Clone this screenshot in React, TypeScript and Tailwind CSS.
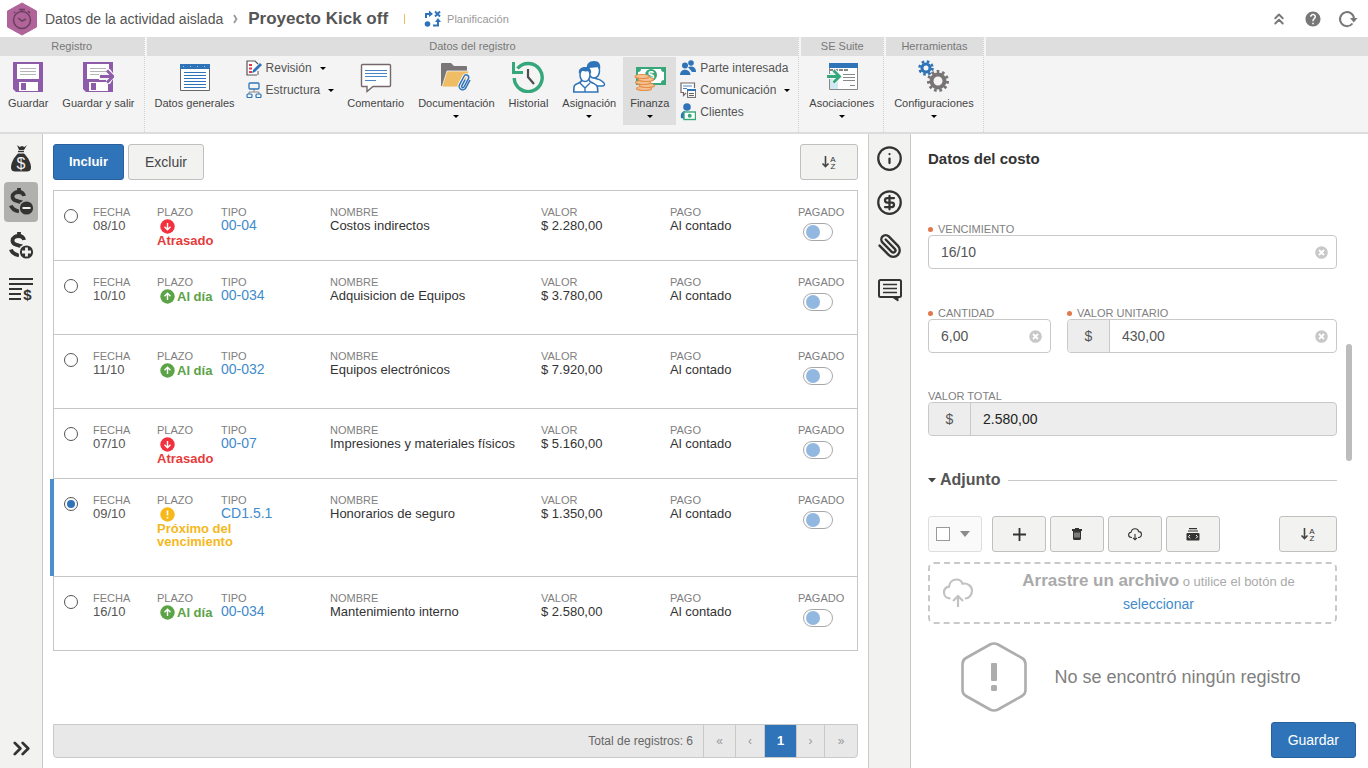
import { useState } from "react";
import type { ReactNode } from "react";
import { ChevronsRight, ChevronsUp, CircleDollarSign, Info, Paperclip } from "lucide-react";
import { MdHelp } from "react-icons/md";
import clsx from "clsx";

type Status = "late" | "onTime" | "soon";

interface Cost {
  id: number;
  date: string;
  status: Status;
  type: string;
  name: string;
  value: string;
}

const costs: Cost[] = [
  { id: 1, date: "08/10", status: "late", type: "00-04", name: "Costos indirectos", value: "$ 2.280,00" },
  { id: 2, date: "10/10", status: "onTime", type: "00-034", name: "Adquisicion de Equipos", value: "$ 3.780,00" },
  { id: 3, date: "11/10", status: "onTime", type: "00-032", name: "Equipos electrónicos", value: "$ 7.920,00" },
  { id: 4, date: "07/10", status: "late", type: "00-07", name: "Impresiones y materiales físicos", value: "$ 5.160,00" },
  { id: 5, date: "09/10", status: "soon", type: "CD1.5.1", name: "Honorarios de seguro", value: "$ 1.350,00" },
  { id: 6, date: "16/10", status: "onTime", type: "00-034", name: "Mantenimiento interno", value: "$ 2.580,00" },
];

const rowHeights: Record<Status, string> = {
  late: "h-[70px]",
  onTime: "h-[74px]",
  soon: "h-[98px]",
};

/* ---------- Ribbon icons ---------- */

function SaveIcon({ exit = false }: { exit?: boolean }) {
  return (
    <svg width="32" height="32" viewBox="0 0 32 32" aria-hidden="true">
      <path d="M1 1h30v30H4l-3-3z" fill="#8e5bab" />
      <path d="M5 3h22v15H5z" fill="#fff" />
      <path d="M8 7.500h16M8 10.500h16M8 13.500h16" stroke="#b5b5b5" strokeWidth="1" />
      <path d="M7 21h19v9H7z" fill="#fff" />
      <path d="M9 22h5v7H9z" fill="#8e5bab" />
      {exit && (
        <>
          <path d="M17 12h7V8h4l5 7-5 8h-4v-4h-7z" fill="#f4f4f4" />
          <path d="M18 15.500h13M25 9.500l6 6-6 6" fill="none" stroke="#8e5bab" strokeWidth="2.800" />
        </>
      )}
    </svg>
  );
}

function GeneralDataIcon() {
  return (
    <svg width="32" height="32" viewBox="0 0 32 32" aria-hidden="true">
      <path d="M1.500 3.500h29v26h-29z" fill="#fff" stroke="#666" />
      <path d="M1 3h30v5H1z" fill="#2f74b8" />
      <path d="M5 11.500h22M5 14.500h22M5 17.500h22M5 20.500h22M5 23.500h22M5 26.500h22" stroke="#2f74b8" />
      <path d="M4 5.500h1M11 5.500h1M18 5.500h1M25 5.500h1" stroke="#a8c8e6" />
    </svg>
  );
}

function CommentRibbonIcon() {
  return (
    <svg width="32" height="32" viewBox="0 0 32 32" aria-hidden="true">
      <path d="M2.500 3.500h27a1 1 0 0 1 1 1v20a1 1 0 0 1-1 1H13l-6 5v-5H2.500a1 1 0 0 1-1-1v-20a1 1 0 0 1 1-1z" fill="#fff" stroke="#75676a" strokeWidth="1.400" />
      <path d="M5 9.500h22M5 12.500h22M5 15.500h22M5 19.500h11" stroke="#4a86c5" />
    </svg>
  );
}

function DocumentsIcon() {
  return (
    <svg width="32" height="32" viewBox="0 0 32 32" aria-hidden="true">
      <path d="M1 3a1 1 0 0 1 1-1h9l3 3h12a1 1 0 0 1 1 1v19H1z" fill="#7a7576" />
      <path d="M7 10h22l-5 16H2z" fill="#efbd64" stroke="#f4f4f4" strokeWidth="0.800" />
      <g transform="rotate(28 25 22)">
        <path d="M28 17v9a3.500 3.500 0 0 1-7 0V16.500a2.500 2.500 0 0 1 5 0V26a1 1 0 0 1-2.500 0v-7" fill="none" stroke="#f4f4f4" strokeWidth="3.500" />
        <path d="M28 17v9a3.500 3.500 0 0 1-7 0V16.500a2.500 2.500 0 0 1 5 0V26a1 1 0 0 1-2.500 0v-7" fill="none" stroke="#2f74b8" strokeWidth="1.500" />
      </g>
    </svg>
  );
}

function HistoryIcon() {
  return (
    <svg width="34" height="32" viewBox="0 0 34 32" aria-hidden="true">
      <path d="M6.500 7.500A14 14 0 1 1 3.200 17" fill="none" stroke="#35a77b" strokeWidth="3.400" />
      <path d="M1 1v12h11v-3H4V1z" fill="#35a77b" />
      <path d="M17 8v8l6 7" fill="none" stroke="#4d4d4d" strokeWidth="2.200" />
    </svg>
  );
}

function AssignIcon() {
  return (
    <svg width="34" height="34" viewBox="0 0 34 34" aria-hidden="true">
      <path d="M20 17c1 2 7 1 11 5 2 2 2 3 0 4h-8" fill="#fff" stroke="#2f74b8" strokeWidth="1.500" />
      <ellipse cx="22" cy="11" rx="5.500" ry="7" fill="#fff" stroke="#2f74b8" strokeWidth="1.500" />
      <path d="M15 9c-1-5 2-8 7-8s7 3 6 9l-2-3c-4 1-8 0-11 2z" fill="#2f74b8" />
      <path d="M1.800 32c0-7 0-7 5-9 3-1 3-3 3-4h7c0 2 1 3 4 4 4 2 5 2 5 9z" fill="#fff" stroke="#2f74b8" strokeWidth="1.600" />
      <path d="M8 23l5 5 5-5M13 28v4" fill="none" stroke="#2f74b8" strokeWidth="1.400" />
      <ellipse cx="13" cy="15" rx="5" ry="6.500" fill="#fff" stroke="#2f74b8" strokeWidth="1.500" />
      <path d="M7 14c-1-5 2-7 6-7s7 2 6 7l-2-3c-3 1-7 0-8 0z" fill="#2f74b8" />
    </svg>
  );
}

function FinanceIcon() {
  return (
    <svg width="34" height="32" viewBox="0 0 34 32" aria-hidden="true">
      <path d="M3 6h30v18H3z" fill="#35a77b" />
      <path d="M8 8h20a3 3 0 0 0 3 3v8a3 3 0 0 0-3 3H8a3 3 0 0 0-3-3v-8a3 3 0 0 0 3-3z" fill="#fff" />
      <circle cx="18" cy="14" r="6" fill="#35a77b" />
      <text x="18" y="18" textAnchor="middle" fontSize="11" fontWeight="bold" fill="#fff">$</text>
      <g fill="#f6c294" stroke="#e58f48" strokeWidth="1.200">
        <ellipse cx="11" cy="27.500" rx="7.500" ry="2" />
        <ellipse cx="14" cy="24.500" rx="7.500" ry="2" />
        <ellipse cx="10" cy="21.500" rx="7.500" ry="2" />
        <ellipse cx="13" cy="18.500" rx="7.500" ry="2" />
        <ellipse cx="9" cy="15.500" rx="7" ry="2" />
      </g>
    </svg>
  );
}

function AssociationsIcon() {
  return (
    <svg width="34" height="32" viewBox="0 0 34 32" aria-hidden="true">
      <path d="M4.500 2.500h28v26h-28z" fill="#fff" stroke="#888" />
      <path d="M4 2h29v5H4z" fill="#2f74b8" />
      <path d="M5 12h8v16H5z" fill="#cfeaf3" />
      <path d="M4 9h19" stroke="#888" strokeWidth="2" strokeDasharray="4 1" />
      <path d="M18 13.500h12M18 16.500h12M18 19.500h12M25 24.500h5" stroke="#888" />
      <path d="M2 15.500h12M8.500 9.500l6 6-6 6" fill="none" stroke="#f4f4f4" strokeWidth="5" />
      <path d="M2 15.500h12M8.500 9.500l6 6-6 6" fill="none" stroke="#35a77b" strokeWidth="2.800" />
    </svg>
  );
}

function SettingsIcon() {
  return (
    <svg width="34" height="34" viewBox="0 0 34 34" aria-hidden="true">
      <circle cx="9" cy="8" r="4" fill="none" stroke="#2f74b8" strokeWidth="3" />
      <circle cx="9" cy="8" r="6.500" fill="none" stroke="#2f74b8" strokeWidth="2.600" strokeDasharray="2.600 2.500" />
      <circle cx="21" cy="21" r="6.500" fill="none" stroke="#787475" strokeWidth="4" />
      <circle cx="21" cy="21" r="9.500" fill="none" stroke="#787475" strokeWidth="3" strokeDasharray="2.600 2.800" />
    </svg>
  );
}

function ReviewIcon() {
  return (
    <svg width="16" height="16" viewBox="0 0 16 16" aria-hidden="true">
      <path d="M11 15H1V1h8l3 3" fill="#fff" stroke="#555" strokeWidth="1.200" />
      <path d="M12 11v4" stroke="#555" />
      <path d="M3 5h3M3 8.500h3M3 12h3" stroke="#e0394a" strokeWidth="1.800" />
      <path d="M6 13l1-3 7-7 2 2-7 7z" fill="#2f74b8" />
    </svg>
  );
}

function StructureIcon() {
  return (
    <svg width="16" height="16" viewBox="0 0 16 16" fill="none" aria-hidden="true">
      <path d="M8 7v3M3 12v-2h10v2" stroke="#888" />
      <rect x="3" y="1" width="10" height="6" rx="1" stroke="#2f74b8" strokeWidth="1.300" />
      <rect x="1" y="12" width="5" height="3.500" rx="1" stroke="#2f74b8" strokeWidth="1.200" />
      <rect x="10" y="12" width="5" height="3.500" rx="1" stroke="#2f74b8" strokeWidth="1.200" />
    </svg>
  );
}

function StakeholderIcon() {
  return (
    <svg width="16" height="16" viewBox="0 0 16 16" fill="#2f74b8" aria-hidden="true">
      <circle cx="11" cy="3" r="2.800" />
      <path d="M8 7c3-1 8-1 8 5h-4z" />
      <circle cx="5" cy="5.500" r="3" />
      <path d="M0 15c0-7 10-7 10.500 0z" />
    </svg>
  );
}

function CommunicationIcon() {
  return (
    <svg width="16" height="16" viewBox="0 0 16 16" aria-hidden="true">
      <path d="M6 11l-2.500 2.500V10.500H1V1h13.500v5" fill="#fff" stroke="#75676a" strokeWidth="1.200" />
      <path d="M3 4h9M3 6.500h4" stroke="#4a86c5" />
      <rect x="7.600" y="7.600" width="8" height="7.800" fill="#fff" stroke="#666" />
      <path d="M7 8h9" stroke="#2f74b8" strokeWidth="2" />
      <path d="M9 11.500h5M9 13.500h5" stroke="#666" />
    </svg>
  );
}

function ClientsIcon() {
  return (
    <svg width="16" height="18" viewBox="0 0 16 18" aria-hidden="true">
      <circle cx="7" cy="4" r="3.800" fill="#2f74b8" />
      <path d="M1 15c-1-5 2-7 4-7v8z" fill="#2f74b8" />
      <rect x="4" y="9" width="11.500" height="7.500" fill="#fff" stroke="#35a77b" strokeWidth="1.400" />
      <circle cx="9.700" cy="12.800" r="2" fill="#35a77b" />
    </svg>
  );
}

/* ---------- Rail and toolbar icons ---------- */

function MoneyBagIcon() {
  return (
    <svg width="28" height="30" viewBox="0 0 28 30" aria-hidden="true">
      <path d="M10 0l2.500 2L15 1l2.500 1L20 0l-3 5h-5z" fill="#333" />
      <path d="M11 6.500h6" stroke="#333" strokeWidth="1.400" />
      <path d="M11 8.500h6c4 4 7 9 7 14 0 3-2 4-4 4H8c-2 0-4-1-4-4 0-5 3-10 7-14z" fill="#333" />
      <text x="14" y="24" textAnchor="middle" fontSize="16" fill="#f2f2f1">$</text>
    </svg>
  );
}

function DollarBadgeIcon({ plus = false }: { plus?: boolean }) {
  const back = plus ? "#f2f2f1" : "#b0b0af";
  return (
    <svg width="28" height="30" viewBox="0 0 28 30" aria-hidden="true">
      <path d="M17 9C16.500 6 14 5 11.500 5S5.500 6.500 5.500 9.500c0 5 6 4.500 10 6M4 18.500c1 4 4 5 8 6M12 1v4" fill="none" stroke="#333" strokeWidth="3.800" />
      <circle cx="19.500" cy="21" r="8" fill={back} />
      <circle cx="19.500" cy="21" r="6.600" fill="#333" />
      {plus ? (
        <path d="M19.500 16.500v9M15 21h9" stroke="#f2f2f1" strokeWidth="2.800" />
      ) : (
        <path d="M15.500 21h8" stroke="#f2f2f1" strokeWidth="2" />
      )}
    </svg>
  );
}

function ListDollarIcon() {
  return (
    <svg width="26" height="26" viewBox="0 0 26 26" aria-hidden="true">
      <path d="M1 2h24M1 7h24M1 12h13M1 17h12M1 22h12" stroke="#333" strokeWidth="1.800" />
      <text x="19.500" y="23" textAnchor="middle" fontSize="15" fontWeight="bold" fill="#333">$</text>
    </svg>
  );
}

function NoteIcon() {
  return (
    <svg width="26" height="26" viewBox="0 0 26 26" fill="none" stroke="#333" aria-hidden="true">
      <rect x="2" y="3" width="22" height="17" rx="1.500" strokeWidth="2" />
      <path d="M6 7.500h14M6 11.500h14M6 15.500h14" strokeWidth="1.700" />
      <path d="M15 20h6v4z" fill="#333" />
    </svg>
  );
}

function SortIcon() {
  return (
    <svg width="16" height="16" viewBox="0 0 16 16" aria-hidden="true">
      <path d="M4.500 2v10M1.500 9.500l3 3 3-3" fill="none" stroke="#444" strokeWidth="1.600" />
      <text x="12" y="7.500" textAnchor="middle" fontSize="8" fill="#333">A</text>
      <text x="12" y="14.500" textAnchor="middle" fontSize="8" fill="#333">Z</text>
    </svg>
  );
}

function TrashIcon() {
  return (
    <svg width="12" height="12" viewBox="0 0 12 12" aria-hidden="true">
      <path d="M1 1h3V0h4v1h3v2H1z" fill="#333" />
      <path d="M2 3h8v7.500A1.500 1.500 0 0 1 8.500 12h-5A1.500 1.500 0 0 1 2 10.500z" fill="#333" />
      <path d="M4 4.500v5M6 4.500v5M8 4.500v5" stroke="#eee" strokeWidth="0.800" />
    </svg>
  );
}

function CloudDownIcon() {
  return (
    <svg width="14" height="13" viewBox="0 0 14 13" fill="none" stroke="#333" strokeWidth="1.100" aria-hidden="true">
      <path d="M4 9.500H3.500C1.500 9.500.600 8.300.600 6.800S1.800 4.500 3 4.300C3.500 2 5 .800 7 .800s3.300 1.200 3.700 2.800c1.700 0 2.700 1.200 2.700 2.700S12.300 9.500 10.500 9.500H10" />
      <path d="M7 6v5.500M5 9.800l2 2 2-2" />
    </svg>
  );
}

function CloudUpIcon() {
  return (
    <svg className="shrink-0" width="32" height="30" viewBox="0 0 32 30" fill="none" stroke="#c2c2c2" strokeWidth="2.200" aria-hidden="true">
      <path d="M8.500 20.500C4.500 20.500 2 18 2 14.500c0-3 2-5.300 5-5.800C7.500 4.500 10.500 1.500 14.500 1.500c3 0 5 1.500 6 4.200 5-1 9.500 2.300 9.500 7 0 4.500-3 7.800-7 7.800" />
      <path d="M16 29V18.500M11 23l5-5 5 5" />
    </svg>
  );
}

function StackIcon() {
  return (
    <svg width="14" height="13" viewBox="0 0 14 13" aria-hidden="true">
      <path d="M3 .600h8M2 3h10" stroke="#333" strokeWidth="1.200" />
      <rect x="0.500" y="5" width="13" height="7.500" rx="1" fill="#333" />
      <path d="M4 7L2.500 8.700 4 10.400M10 7l1.500 1.700L10 10.400" stroke="#fff" fill="none" />
    </svg>
  );
}

function Caret({ className }: { className?: string }) {
  return <span className={clsx("block h-0 w-0 border-x-[3px] border-t-[3px] border-x-transparent border-t-black", className)} />;
}

/* ---------- Ribbon ---------- */

interface RibbonButtonProps {
  label: string;
  icon: ReactNode;
  menu?: boolean;
  active?: boolean;
}

function BigButton({ label, icon, menu, active }: RibbonButtonProps) {
  return (
    <button
      type="button"
      className={clsx("flex h-[68px] flex-col items-center px-[7px] pt-1 text-[11px] leading-3 text-[#444]", active && "bg-[#dedede]")}
    >
      <span className="mb-1 flex h-8 items-center">{icon}</span>
      {label}
      {menu && <Caret className="mt-1.5" />}
    </button>
  );
}

function SmallButton({ label, icon, menu }: RibbonButtonProps) {
  return (
    <button type="button" className="flex h-[22px] items-center gap-1 text-xs text-[#555]">
      <span className="flex w-4 justify-center">{icon}</span>
      {label}
      {menu && <Caret className="ml-1" />}
    </button>
  );
}

function RibbonGroup({ title, children }: { title: string; children: ReactNode }) {
  return (
    <section className="flex flex-col border-r border-dotted border-[#cfcfcf]">
      <h2 className="h-[19px] bg-[#dedede] text-center text-[11px] leading-[18px] text-[#777]">{title}</h2>
      <div className="flex flex-1 pt-px pr-0.5 pl-px">{children}</div>
    </section>
  );
}

function Ribbon() {
  return (
    <nav className="flex h-[97px] shrink-0 gap-0.5 border-b-2 border-[#dcdcdc] bg-[#f4f4f4]">
      <RibbonGroup title="Registro">
        <BigButton label="Guardar" icon={<SaveIcon />} />
        <BigButton label="Guardar y salir" icon={<SaveIcon exit />} />
      </RibbonGroup>
      <RibbonGroup title="Datos del registro">
        <BigButton label="Datos generales" icon={<GeneralDataIcon />} />
        <div className="pr-1.5 pl-1">
          <SmallButton label="Revisión" icon={<ReviewIcon />} menu />
          <SmallButton label="Estructura" icon={<StructureIcon />} menu />
        </div>
        <BigButton label="Comentario" icon={<CommentRibbonIcon />} />
        <BigButton label="Documentación" icon={<DocumentsIcon />} menu />
        <BigButton label="Historial" icon={<HistoryIcon />} />
        <BigButton label="Asignación" icon={<AssignIcon />} menu />
        <BigButton label="Finanza" icon={<FinanceIcon />} menu active />
        <div className="pr-1.5 pl-1">
          <SmallButton label="Parte interesada" icon={<StakeholderIcon />} />
          <SmallButton label="Comunicación" icon={<CommunicationIcon />} menu />
          <SmallButton label="Clientes" icon={<ClientsIcon />} />
        </div>
      </RibbonGroup>
      <RibbonGroup title="SE Suite">
        <BigButton label="Asociaciones" icon={<AssociationsIcon />} menu />
      </RibbonGroup>
      <RibbonGroup title="Herramientas">
        <BigButton label="Configuraciones" icon={<SettingsIcon />} menu />
      </RibbonGroup>
      <div className="h-[19px] flex-1 bg-[#dedede]" />
    </nav>
  );
}

function Header() {
  return (
    <header className="flex h-[37px] shrink-0 items-center pr-2.5 pl-1.5 text-[#555]">
      <svg width="32" height="34" viewBox="0 0 32 34" aria-hidden="true">
        <path d="M16 1l14.500 8v16L16 33 1.500 25V9z" fill="#b0649a" stroke="#b0649a" strokeWidth="1" />
        <g fill="none" stroke="#6b3f60" strokeWidth="1.500">
          <circle cx="16" cy="18" r="8.500" />
          <path d="M12 16l4 3 4-2M13 7.500h6M16 8v2M22 9l2 2M9 11l-1-1" />
        </g>
      </svg>
      <a href="#" className="ml-[7px] text-sm">Datos de la actividad aislada</a>
      <svg className="mx-2.5" width="5" height="10" viewBox="0 0 5 10" aria-hidden="true">
        <path d="M1 1l2.500 4L1 9" fill="none" stroke="#999" strokeWidth="1.800" />
      </svg>
      <h1 className="text-[17px] font-bold">Proyecto Kick off</h1>
      <span className="ml-4 h-2.5 w-px bg-[#f0b860]" />
      <svg className="ml-[19px]" width="18" height="18" viewBox="0 0 18 18" aria-hidden="true">
        <g fill="none" stroke="#2f74b8" strokeWidth="2">
          <path d="M2 8V4h4M11 1.500l5 5M16 1.500l-5 5M9 15.500h5V11" />
        </g>
        <path d="M5 .500L9 4 5 7zM11 12l3-4 3 4z" fill="#2f74b8" />
        <circle cx="3.500" cy="14" r="2.800" fill="#2f74b8" />
      </svg>
      <span className="ml-[5px] pt-0.5 text-[11px] text-[#999]">Planificación</span>
      <div className="ml-auto flex items-center gap-4 text-[#777]">
        <button type="button" aria-label="Contraer"><ChevronsUp size={18} strokeWidth={2.5} /></button>
        <button type="button" aria-label="Ayuda"><MdHelp size={18} /></button>
        <button type="button" aria-label="Actualizar">
          <svg width="20" height="18" viewBox="0 0 20 18" aria-hidden="true">
            <path d="M14.500 13.500A7 7 0 1 1 16 8.500" fill="none" stroke="#777" strokeWidth="2" />
            <path d="M12 8h7.500l-3.700 4.500z" fill="#777" />
          </svg>
        </button>
      </div>
    </header>
  );
}

/* ---------- Cost list ---------- */

function StatusBadge({ status }: { status: Status }) {
  if (status === "onTime") {
    return (
      <span className="flex items-center gap-0.5 pl-[3px] text-[13px] leading-[15px] font-bold whitespace-nowrap text-[#5ba346]">
        <svg width="15" height="15" viewBox="0 0 15 15" aria-hidden="true">
          <circle cx="7.500" cy="7.500" r="7.200" fill="#5ba346" />
          <path d="M7.500 11V4.500M4.500 7.200l3-3 3 3" fill="none" stroke="#fff" strokeWidth="1.400" />
        </svg>
        Al día
      </span>
    );
  }
  if (status === "late") {
    return (
      <span className="block text-[13px] leading-[13px] font-bold text-[#e63b3b]">
        <svg className="ml-[3px]" width="15" height="15" viewBox="0 0 15 15" aria-hidden="true">
          <circle cx="7.500" cy="7.500" r="7.200" fill="#f2303e" />
          <path d="M7.500 4v6.500M4.500 7.800l3 3 3-3" fill="none" stroke="#fff" strokeWidth="1.400" />
        </svg>
        Atrasado
      </span>
    );
  }
  return (
    <span className="block text-[13px] leading-[13px] font-bold whitespace-nowrap text-[#f5b81c]">
      <svg className="ml-[3px]" width="15" height="15" viewBox="0 0 15 15" aria-hidden="true">
        <circle cx="7.500" cy="7.500" r="7.200" fill="#f8b81a" />
        <path d="M7.500 3.500v5M7.500 10v1.600" stroke="#fff" strokeWidth="1.600" />
      </svg>
      Próximo del
      <br />
      vencimiento
    </span>
  );
}

function Cell({ label, children }: { label: string; children: ReactNode }) {
  return (
    <td className="border-b border-[#c6c6c6] pt-[15px] align-top text-[13px] leading-[13px] text-[#333]">
      <span className="block text-[11px] leading-[13px] text-[#808080]">{label}</span>
      {children}
    </td>
  );
}

function CostTable() {
  const [selected, setSelected] = useState(5);

  return (
    <div className="mt-2.5 border-x border-t border-[#c6c6c6]">
      <table className="w-full table-fixed border-separate border-spacing-0">
        <colgroup>
          <col className="w-[39px]" />
          <col className="w-16" />
          <col className="w-16" />
          <col className="w-[109px]" />
          <col />
          <col className="w-[129px]" />
          <col className="w-[128px]" />
          <col className="w-[59px]" />
        </colgroup>
        <tbody>
          {costs.map((cost) => (
            <tr key={cost.id} className={rowHeights[cost.status]}>
              <td className="relative border-b border-[#c6c6c6] pt-[18px] pl-2.5 align-top">
                {selected === cost.id && <span className="absolute inset-y-0 -left-1 w-1 bg-[#4a8fce]" />}
                <input
                  type="radio"
                  name="cost"
                  aria-label={cost.name}
                  checked={selected === cost.id}
                  onChange={() => setSelected(cost.id)}
                  className="block h-3.5 w-3.5 appearance-none rounded-full border border-[#555] bg-white p-0.5 before:block before:h-2 before:w-2 before:rounded-full checked:before:bg-[#2f74b8]"
                />
              </td>
              <Cell label="FECHA">
                <span className="text-[#555]">{cost.date}</span>
              </Cell>
              <Cell label="PLAZO">
                <StatusBadge status={cost.status} />
              </Cell>
              <Cell label="TIPO">
                <a href="#" className="text-sm leading-[13px] text-[#3f8bcb]">{cost.type}</a>
              </Cell>
              <Cell label="NOMBRE">{cost.name}</Cell>
              <Cell label="VALOR">{cost.value}</Cell>
              <Cell label="PAGO">Al contado</Cell>
              <Cell label="PAGADO">
                <input
                  type="checkbox"
                  role="switch"
                  aria-label="Pagado"
                  className="mt-1 ml-[5px] block h-[18px] w-[30px] appearance-none rounded-full border border-[#a8a8a8] bg-white p-px pl-0.5 before:block before:h-3.5 before:w-3.5 before:rounded-full before:bg-[#93b8e0] checked:before:ml-3"
                />
              </Cell>
            </tr>
          ))}
        </tbody>
      </table>
    </div>
  );
}

function Pagination() {
  const arrow = "border-l border-[#c9c9c9] text-[#999]";
  return (
    <div className="mt-auto flex h-[34px] shrink-0 items-stretch rounded-b border border-[#c9c9c9] bg-[#e8e8e8] text-xs text-[#666]">
      <span className="mr-2.5 ml-auto self-center">Total de registros: 6</span>
      <button type="button" className={clsx(arrow, "w-8")}>«</button>
      <button type="button" className={clsx(arrow, "w-[29px]")}>‹</button>
      <button type="button" className="w-8 border-l border-[#c9c9c9] bg-[#2f74b8] text-[13px] font-bold text-white">1</button>
      <button type="button" className={clsx(arrow, "w-7")}>›</button>
      <button type="button" className={clsx(arrow, "w-[33px]")}>»</button>
    </div>
  );
}

/* ---------- Detail form ---------- */

const toolButton = "flex h-9 items-center justify-center rounded-[3px] border border-[#c0c0c0] bg-[#f2f2f1]";

function SortButton() {
  return (
    <button type="button" aria-label="Ordenar" className={clsx(toolButton, "ml-auto w-[58px]")}>
      <SortIcon />
    </button>
  );
}

interface FieldProps {
  id: string;
  label: string;
  value: string;
  required?: boolean;
  prefix?: string;
  readOnly?: boolean;
  className?: string;
}

function Field({ id, label, value, required, prefix, readOnly, className }: FieldProps) {
  const [text, setText] = useState(value);

  return (
    <div className={className}>
      <label htmlFor={id} className="flex items-center gap-[5px] text-[11px] leading-3 text-[#808080]">
        {required && <span className="h-[5px] w-[5px] rounded-full bg-[#e2774a]" />}
        {label}
      </label>
      <div className={clsx("flex h-[34px] items-center overflow-hidden rounded border border-[#c9c9c9]", readOnly && "bg-[#ededed]")}>
        {prefix && (
          <span className="flex h-full w-[42px] shrink-0 items-center justify-center border-r border-[#c9c9c9] bg-[#ededed] text-sm text-[#555]">
            {prefix}
          </span>
        )}
        <input
          id={id}
          type="text"
          value={text}
          readOnly={readOnly}
          onChange={(e) => setText(e.target.value)}
          className={clsx("min-w-0 flex-1 bg-transparent pl-3 text-sm outline-none", readOnly ? "text-[#222]" : "text-[#555]")}
        />
        {!readOnly && (
          <button type="button" aria-label="Limpiar" onClick={() => setText("")} className="mr-2">
            <svg width="13" height="13" viewBox="0 0 13 13" aria-hidden="true">
              <circle cx="6.500" cy="6.500" r="6.300" fill="#c8c8c8" />
              <path d="M4 4l5 5M9 4L4 9" stroke="#fff" strokeWidth="1.800" />
            </svg>
          </button>
        )}
      </div>
    </div>
  );
}

function Attachments() {
  return (
    <>
      <div className="mt-8 flex h-6 items-center">
        <svg width="8" height="5" viewBox="0 0 8 5" fill="#444" aria-hidden="true">
          <path d="M0 0h8L4 4.500z" />
        </svg>
        <h3 className="ml-1 text-base font-bold text-[#555]">Adjunto</h3>
        <span className="ml-2 h-px flex-1 bg-[#c9c9c9]" />
      </div>

      <div className="mt-6 flex gap-1">
        <div className="mr-1.5 flex h-9 w-[54px] items-center gap-2.5 rounded-[3px] border border-[#dedede] bg-[#fafafa] pl-[7px]">
          <input type="checkbox" aria-label="Seleccionar todo" className="h-3.5 w-3.5 appearance-none border border-[#999] bg-white" />
          <svg width="10" height="6" viewBox="0 0 10 6" fill="#8c8c8c" aria-hidden="true">
            <path d="M0 0h10L5 6z" />
          </svg>
        </div>
        <button type="button" aria-label="Agregar" className={clsx(toolButton, "w-[54px]")}>
          <svg width="13" height="13" viewBox="0 0 13 13" aria-hidden="true">
            <path d="M6.500 0v13M0 6.500h13" stroke="#333" strokeWidth="1.800" />
          </svg>
        </button>
        <button type="button" aria-label="Eliminar" className={clsx(toolButton, "w-[54px]")}><TrashIcon /></button>
        <button type="button" aria-label="Descargar" className={clsx(toolButton, "w-[54px]")}><CloudDownIcon /></button>
        <button type="button" aria-label="Ver" className={clsx(toolButton, "w-[54px]")}><StackIcon /></button>
        <SortButton />
      </div>

      <div className="mt-2.5 flex h-[62px] items-center rounded-md border-2 border-dashed border-[#c9c9c9] pl-3">
        <CloudUpIcon />
        <p className="flex-1 pl-2 text-center text-[13px] leading-[22px] text-[#aaa]">
          <b className="text-[17px]">Arrastre un archivo</b> o utilice el botón de
          <br />
          <a href="#" className="text-sm leading-[22px] text-[#3f8bcb]">seleccionar</a>
        </p>
      </div>

      <div className="mt-[18px] flex items-center justify-center gap-[27px] pr-[3px]">
        <svg width="66" height="70" viewBox="0 0 66 70" aria-hidden="true">
          <path d="M29 2.500q4-2 8 0l24 13.500q3.500 2 3.500 6v26q0 4-3.500 6L37 67.500q-4 2-8 0L5 54q-3.500-2-3.500-6V22q0-4 3.500-6z" fill="none" stroke="#adadad" strokeWidth="2.600" />
          <rect x="30" y="21" width="6" height="18" rx="1" fill="#adadad" />
          <rect x="30" y="43" width="6" height="6" rx="1.500" fill="#adadad" />
        </svg>
        <p className="text-lg text-[#808080]">No se encontró ningún registro</p>
      </div>
    </>
  );
}

function CostPanel() {
  return (
    <aside className="relative flex w-[457px] shrink-0 flex-col">
      <div className="flex-1 overflow-hidden pr-[31px] pl-[17px]">
        <h2 className="mt-[15px] text-[15px] leading-5 font-bold text-[#333]">Datos del costo</h2>
        <Field id="due" label="VENCIMIENTO" value="16/10" required className="mt-[54px]" />
        <div className="mt-[38px] flex gap-4">
          <Field id="amount" label="CANTIDAD" value="6,00" required className="w-[123px]" />
          <Field id="unit" label="VALOR UNITARIO" value="430,00" required prefix="$" className="flex-1" />
        </div>
        <Field id="total" label="VALOR TOTAL" value="2.580,00" prefix="$" readOnly className="mt-[37px]" />
        <Attachments />
      </div>
      {/* Scrollbar thumb */}
      <span className="absolute top-[210px] right-4 h-[117px] w-1.5 rounded-full bg-[#bcbcbc]" />
      <div className="flex justify-end pr-3 pb-2.5">
        <button type="button" className="h-9 rounded-[3px] border border-[#2a5f9e] bg-[#2f74b8] px-4 text-sm text-white">
          Guardar
        </button>
      </div>
    </aside>
  );
}

export default function App() {
  const railButton = "flex h-10 w-[34px] items-center justify-center rounded";

  return (
    <div className="flex h-screen flex-col bg-white font-['Liberation_Sans',Arial,sans-serif]">
      <Header />
      <Ribbon />
      <div className="flex min-h-0 flex-1">
        <nav className="flex w-[43px] shrink-0 flex-col items-center gap-1 border-r border-[#c9c9c9] bg-[#f2f2f1] pt-1 text-[#333]">
          <button type="button" aria-label="Costos" className={clsx(railButton, "pt-1")}><MoneyBagIcon /></button>
          <button type="button" aria-label="Gastos" className={clsx(railButton, "bg-[#b0b0af]")}><DollarBadgeIcon /></button>
          <button type="button" aria-label="Ingresos" className={railButton}><DollarBadgeIcon plus /></button>
          <button type="button" aria-label="Resumen" className={railButton}><ListDollarIcon /></button>
          <button type="button" aria-label="Expandir" className={clsx(railButton, "mt-auto")}>
            <ChevronsRight size={27} strokeWidth={2.5} />
          </button>
        </nav>

        <main className="flex min-w-0 flex-1 flex-col p-2.5">
          <div className="flex gap-1">
            <button type="button" className="h-9 rounded-[3px] border border-[#2a5f9e] bg-[#2f74b8] px-[15px] text-[13px] font-bold text-white">
              Incluir
            </button>
            <button type="button" className={clsx(toolButton, "px-4 text-sm text-[#444]")}>Excluir</button>
            <SortButton />
          </div>
          <CostTable />
          <Pagination />
        </main>

        <nav className="flex w-[43px] shrink-0 flex-col items-center gap-1 border-x border-[#c9c9c9] bg-[#f2f2f1] pt-1 text-[#333]">
          <button type="button" aria-label="Información" className={railButton}><Info size={27} strokeWidth={2} /></button>
          <button type="button" aria-label="Costo" className={railButton}><CircleDollarSign size={27} strokeWidth={2} /></button>
          <button type="button" aria-label="Adjuntos" className={railButton}>
            <Paperclip size={26} strokeWidth={2.2} className="-scale-x-100" />
          </button>
          <button type="button" aria-label="Comentarios" className={railButton}><NoteIcon /></button>
        </nav>

        <CostPanel />
      </div>
    </div>
  );
}
